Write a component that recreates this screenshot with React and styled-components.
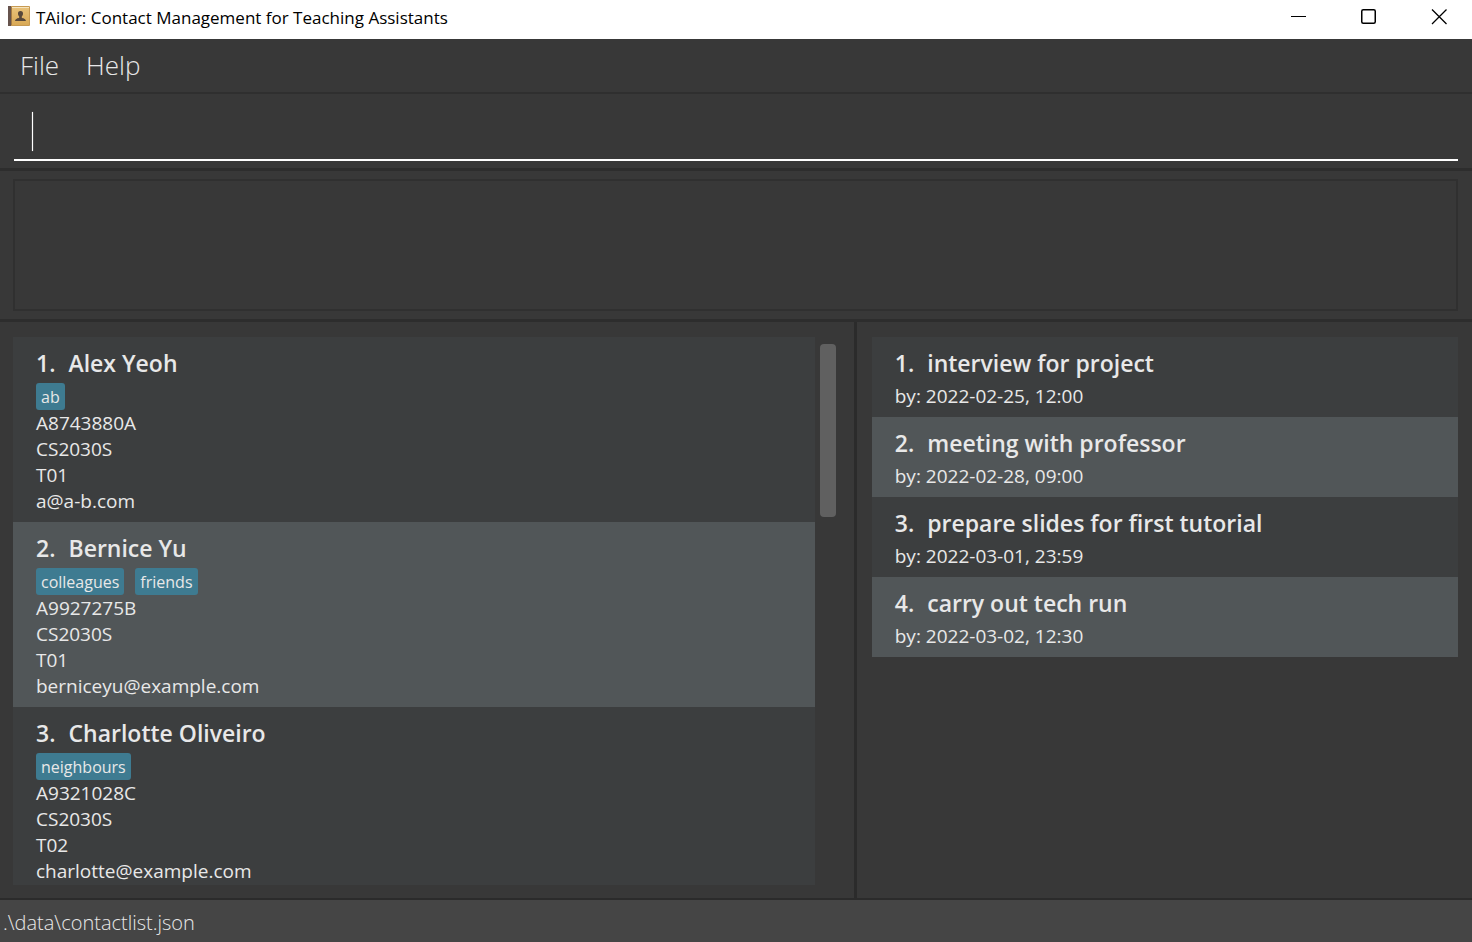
import React from "react";
import styled, { createGlobalStyle } from "styled-components";

const GlobalStyle = createGlobalStyle`
  *, *::before, *::after { box-sizing: border-box; }
  body { margin: 0; background: #383838; }
  button, input { font: inherit; color: inherit; background: none; border: 0; padding: 0; margin: 0; }
  ol, ul { list-style: none; margin: 0; padding: 0; }
  h2, p { margin: 0; }
`;

const Window = styled.div`
  display: flex;
  flex-direction: column;
  height: 100vh;
  min-height: 600px;
  background: #383838;
  color: #e8e8e8;
  font-family: "Open Sans", "Noto Sans", sans-serif;
`;

const TitleBar = styled.header`
  display: flex;
  flex: none;
  height: 39px;
  padding: 5px 0 0 8px;
  gap: 6px;
  background: #ffffff;
  color: #000000;
`;

const AppTitle = styled.span`
  flex: 1;
  font-size: 17px;
  line-height: 26px;
  white-space: nowrap;
`;

const WindowControls = styled.div`
  display: flex;
  margin-right: -2px;
`;

const WindowButton = styled.button`
  display: flex;
  align-items: center;
  justify-content: center;
  width: 70px;
  height: 24px;
`;

const MenuBar = styled.nav`
  display: flex;
  flex: none;
  align-items: center;
  height: 55px;
  padding: 0 20px 2px;
  gap: 27px;
  border-bottom: 2px solid #2f2f2f;
`;

const MenuButton = styled.button`
  font-size: 26px;
  font-weight: 300;
  line-height: 36px;
`;

const CommandPane = styled.form`
  flex: none;
  height: 77px;
  padding: 17px 14px 8px;
  border-bottom: 3px solid #2d2d2d;
`;

const CommandField = styled.div`
  display: flex;
  height: 50px;
  padding: 1px 0 8px 18px;
  border-bottom: 2px solid #ffffff;
`;

const Caret = styled.span`
  flex: none;
  width: 1px;
  height: 39px;
  background: #ffffff;
  box-shadow: 0 0 1px #ffffff;
`;

const CommandInput = styled.input`
  flex: 1;
  min-width: 0;
  font-size: 26px;
  font-weight: 300;
  outline: none;
  caret-color: transparent;
`;

const ResultPane = styled.section`
  flex: none;
  padding: 8px 14px 8px 13px;
  border-bottom: 3px solid #2d2d2d;
`;

const ResultBox = styled.output`
  display: block;
  height: 132px;
  border: 2px solid #303030;
`;

const Panels = styled.main`
  display: flex;
  flex: 1;
  min-height: 0;
`;

const ContactPanel = styled.section`
  display: flex;
  gap: 5px;
  width: 58%;
  padding: 15px 18px 13px 13px;
`;

const TaskPanel = styled.section`
  flex: 1;
  padding: 15px 14px 13px 15px;
  border-left: 3px solid #2b2b2b;
`;

const CardList = styled.ol`
  flex: 1;
  min-width: 0;
  overflow: hidden;
`;

const Card = styled.li`
  padding: 10px 23px 8px;
  background: #3c3e3f;

  &:nth-child(even) { background: #515658; }
`;

const CardTitle = styled.h2`
  display: flex;
  gap: 13px;
  margin-bottom: 4px;
  font-size: 23px;
  font-weight: 600;
  line-height: 32px;
  white-space: nowrap;
`;

const Detail = styled.p`
  font-size: 19px;
  line-height: 26px;
  white-space: nowrap;
`;

const Tags = styled.ul`
  display: flex;
  gap: 11px;
`;

const Tag = styled.li`
  height: 27px;
  padding: 0 5px;
  border-radius: 3px;
  background: #3e7b91;
  font-size: 16px;
  font-weight: 500;
  line-height: 28px;
`;

const ScrollTrack = styled.div`
  flex: none;
  width: 16px;
  padding-top: 7px;
`;

const ScrollThumb = styled.div`
  height: 173px;
  border-radius: 4px;
  background: #606060;
`;

const StatusBar = styled.footer`
  flex: none;
  height: 44px;
  padding: 7px 3px 3px;
  border-top: 2px solid #2b2b2b;
  background: #454545;
  font-size: 20px;
  font-weight: 300;
  line-height: 32px;
`;

const contacts = [
  { name: "Alex Yeoh", tags: ["ab"], details: ["A8743880A", "CS2030S", "T01", "a@a-b.com"] },
  { name: "Bernice Yu", tags: ["colleagues", "friends"], details: ["A9927275B", "CS2030S", "T01", "berniceyu@example.com"] },
  { name: "Charlotte Oliveiro", tags: ["neighbours"], details: ["A9321028C", "CS2030S", "T02", "charlotte@example.com"] },
];

const tasks = [
  { name: "interview for project", due: "2022-02-25, 12:00" },
  { name: "meeting with professor", due: "2022-02-28, 09:00" },
  { name: "prepare slides for first tutorial", due: "2022-03-01, 23:59" },
  { name: "carry out tech run", due: "2022-03-02, 12:30" },
];

const AddressBookIcon = () => (
  <svg width="22" height="22" viewBox="0 0 22 22" aria-hidden="true">
    <defs>
      <linearGradient id="cover" x1="0" y1="0" x2="0" y2="1">
        <stop offset="0" stopColor="#e9c27a" />
        <stop offset="1" stopColor="#d9a955" />
      </linearGradient>
    </defs>
    <rect x="0" y="1" width="22" height="20" rx="1" fill="#c79a52" />
    <rect x="4" y="2" width="17" height="18" fill="url(#cover)" />
    <rect x="3" y="2" width="18" height="1" fill="#f5e3bd" />
    <rect x="0" y="1" width="3" height="20" fill="#66534d" />
    <rect x="3" y="2" width="1" height="18" fill="#a67c42" />
    <path d="M12.500 6c-1.800 0-2.700 1.200-2.500 3 .1 1.200.7 1.800 1.200 2.400v1.300c-1.200.6-3.700.7-4.200 3.300h11c-.5-2.600-3-2.700-4.200-3.300v-1.300c.5-.6 1.100-1.200 1.200-2.400.2-1.800-.7-3-2.500-3z" fill="#57473a" />
  </svg>
);

const MinimizeIcon = () => (
  <svg width="16" height="16" viewBox="0 0 16 16" aria-hidden="true">
    <path d="M0 7.500h15" stroke="#000" />
  </svg>
);

const MaximizeIcon = () => (
  <svg width="16" height="16" viewBox="0 0 16 16" aria-hidden="true">
    <rect x=".75" y=".75" width="13.500" height="13.500" rx="1.500" fill="none" stroke="#000" strokeWidth="1.500" />
  </svg>
);

const CloseIcon = () => (
  <svg width="16" height="16" viewBox="0 0 16 16" aria-hidden="true">
    <path d="M1 .5l14.500 14.500M15.500 .5L1 15" stroke="#000" strokeWidth="1.300" />
  </svg>
);

export default function App() {
  return (
    <Window>
      <GlobalStyle />
      <TitleBar>
        <AddressBookIcon />
        <AppTitle>TAilor: Contact Management for Teaching Assistants</AppTitle>
        <WindowControls>
          <WindowButton aria-label="Minimize"><MinimizeIcon /></WindowButton>
          <WindowButton aria-label="Maximize"><MaximizeIcon /></WindowButton>
          <WindowButton aria-label="Close"><CloseIcon /></WindowButton>
        </WindowControls>
      </TitleBar>
      <MenuBar>
        <MenuButton>File</MenuButton>
        <MenuButton>Help</MenuButton>
      </MenuBar>
      <CommandPane onSubmit={(event) => event.preventDefault()}>
        <CommandField>
          <Caret />
          <CommandInput type="text" aria-label="Command" />
        </CommandField>
      </CommandPane>
      <ResultPane>
        <ResultBox aria-label="Result" />
      </ResultPane>
      <Panels>
        <ContactPanel aria-label="Contacts">
          <CardList>
            {contacts.map((contact, index) => (
              <Card key={contact.name}>
                <CardTitle><span>{index + 1}.</span><span>{contact.name}</span></CardTitle>
                <Tags>
                  {contact.tags.map((tag) => <Tag key={tag}>{tag}</Tag>)}
                </Tags>
                {contact.details.map((detail) => <Detail key={detail}>{detail}</Detail>)}
              </Card>
            ))}
          </CardList>
          <ScrollTrack><ScrollThumb /></ScrollTrack>
        </ContactPanel>
        <TaskPanel aria-label="Tasks">
          <CardList>
            {tasks.map((task, index) => (
              <Card key={task.name}>
                <CardTitle><span>{index + 1}.</span><span>{task.name}</span></CardTitle>
                <Detail>by: {task.due}</Detail>
              </Card>
            ))}
          </CardList>
        </TaskPanel>
      </Panels>
      <StatusBar>.\data\contactlist.json</StatusBar>
    </Window>
  );
}
